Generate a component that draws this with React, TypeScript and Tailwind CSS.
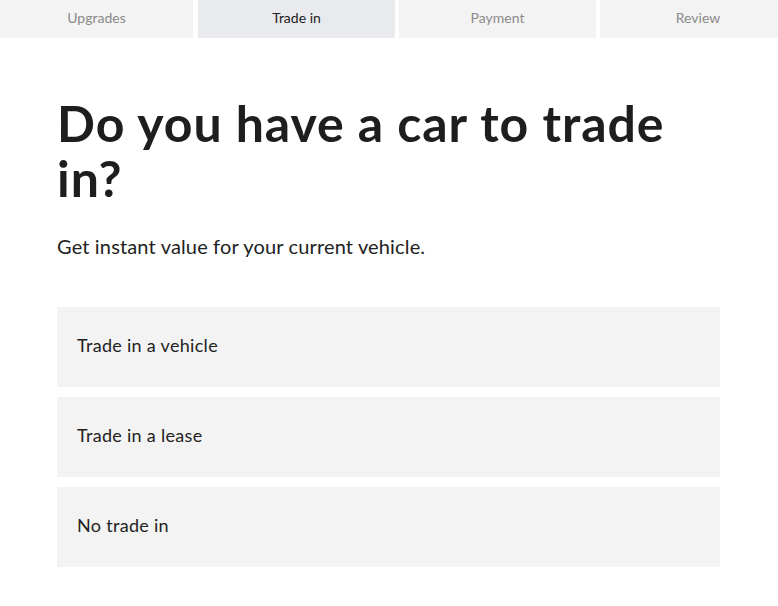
import React from "react";

const tabs = [
  { label: "Upgrades", w: "w-[193px]", active: false },
  { label: "Trade in", w: "w-[197px]", active: true },
  { label: "Payment", w: "w-[197px]", active: false },
  { label: "Review", w: "w-[196px]", active: false },
];

const options = ["Trade in a vehicle", "Trade in a lease", "No trade in"];

export default function App() {
  return (
    <div
      className="w-[778px] h-[606px] bg-white overflow-hidden"
      style={{ fontFamily: "Lato, 'Noto Sans', sans-serif" }}
    >
      <div className="flex h-[38px] gap-[4px] overflow-hidden">
        {tabs.map((t, i) => (
          <div
            key={t.label}
            className={`${t.w} shrink-0 flex items-center justify-center pb-[3px] text-[14px] ${
              t.active ? "bg-[#e9eaed] text-[#222]" : "bg-[#f3f3f3] text-[#8a8a8a]"
            } ${i === 1 ? "ml-[1px]" : ""}`}
          >
            {t.label}
          </div>
        ))}
      </div>
      <div className="pl-[57px] pr-[58px]">
        <h1 className="mt-[58px] text-[50px] leading-[55px] font-bold text-[#1e1e1e] tracking-[0.95px]">
          Do you have a car to trade in?
        </h1>
        <p className="mt-[26px] text-[20px] leading-[28px] text-[#222] tracking-[0.15px]">
          Get instant value for your current vehicle.
        </p>
        <div className="mt-[47px] flex flex-col gap-[10px]">
          {options.map((o) => (
            <div
              key={o}
              className="h-[80px] bg-[#f3f3f3] flex items-center px-[20px] pb-[3px] text-[18px] text-[#222] tracking-[0.3px]"
            >
              {o}
            </div>
          ))}
        </div>
      </div>
    </div>
  );
}
